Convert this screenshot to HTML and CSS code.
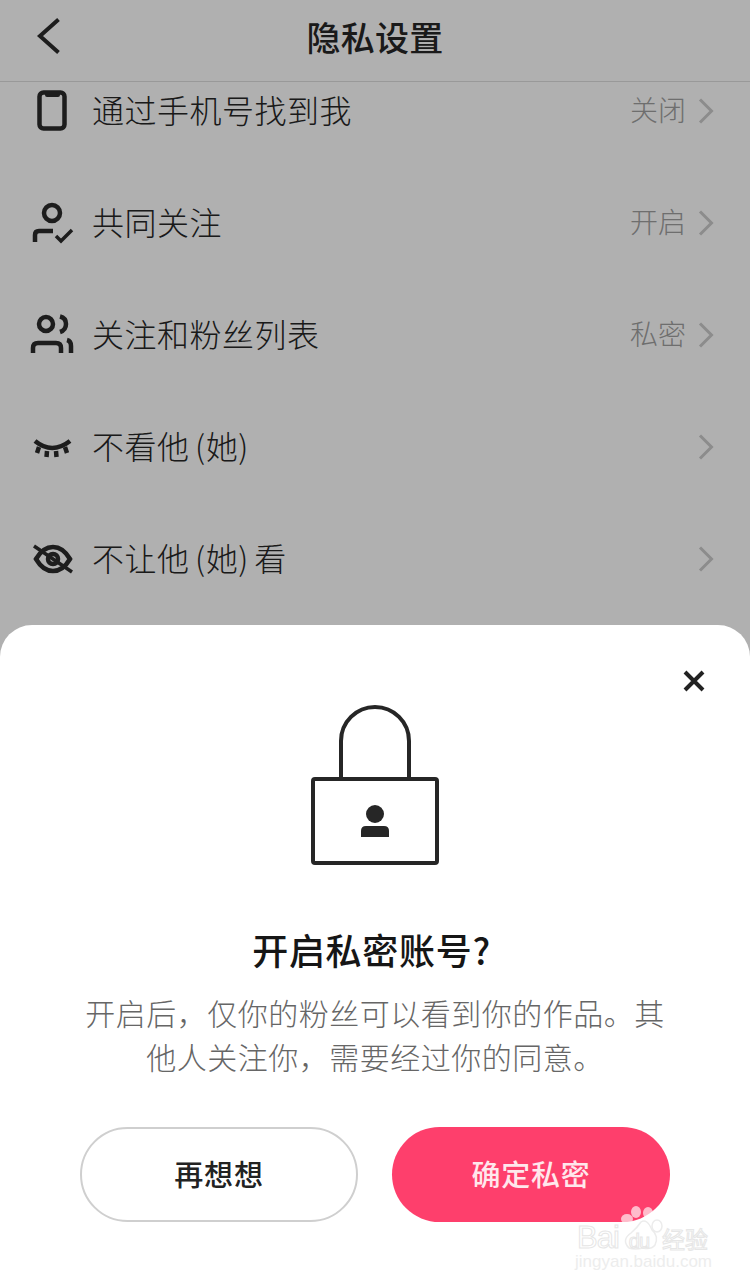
FILE: index.html
```html
<!DOCTYPE html>
<html lang="zh-CN">
<head>
    <meta charset="UTF-8">
    <meta name="viewport" content="width=device-width, initial-scale=1.0">
    <title>隐私设置</title>
    <link rel="stylesheet" href="styles.css">
</head>
<body>

  <div class="page">
    <header class="topbar">
      <svg class="back" width="28" height="40" viewBox="0 0 28 40"><path d="M23.500 2.500 L5 19 L23.500 35.500" /></svg>
      <h1>隐私设置</h1>
    </header>

    <ul class="settings">
      <li class="row">
        <svg class="icon" width="48" height="48" viewBox="0 0 48 48">
          <rect x="11.500" y="5.500" width="25" height="36" rx="4" />
          <path class="solid" d="M17 5 H32 V8 Q32 10 30 10 H19 Q17 10 17 8 Z" />
        </svg>
        <span class="name">通过手机号找到我</span>
        <span class="value">关闭</span>
        <svg class="chevron" width="16" height="26" viewBox="0 0 16 26"><path d="M2 1.500 L13.500 13 L2 24.500" /></svg>
      </li>
      <li class="row">
        <svg class="icon" width="48" height="48" viewBox="0 0 48 48">
          <circle cx="24" cy="14" r="8" />
          <path d="M7 43 V36 Q7 32 11 32 H25" />
          <path class="thin" d="M28 37 L33 42 L44 31" />
        </svg>
        <span class="name">共同关注</span>
        <span class="value">开启</span>
        <svg class="chevron" width="16" height="26" viewBox="0 0 16 26"><path d="M2 1.500 L13.500 13 L2 24.500" /></svg>
      </li>
      <li class="row">
        <svg class="icon" width="48" height="48" viewBox="0 0 48 48">
          <circle cx="18" cy="13" r="7" />
          <path d="M32 5.500 Q38 7 38 13 Q38 19 32 21" />
          <path d="M5 42 V37 Q5 32 10 32 H28 Q33 32 33 37 V42" />
          <path d="M39 29 Q43 30 43 35 V42" />
        </svg>
        <span class="name">关注和粉丝列表</span>
        <span class="value">私密</span>
        <svg class="chevron" width="16" height="26" viewBox="0 0 16 26"><path d="M2 1.500 L13.500 13 L2 24.500" /></svg>
      </li>
      <li class="row">
        <svg class="icon" width="48" height="48" viewBox="0 0 48 48">
          <path d="M7 18 Q24 32 42 18" />
          <path d="M11 24 L9 30 M19 28 L18.500 34 M28 28 L28.500 34 M37 24 L39 30" />
        </svg>
        <span class="name">不看他 (她)</span>
        <svg class="chevron" width="16" height="26" viewBox="0 0 16 26"><path d="M2 1.500 L13.500 13 L2 24.500" /></svg>
      </li>
      <li class="row">
        <svg class="icon" width="48" height="48" viewBox="0 0 48 48">
          <path d="M8 24 Q15 12 25 12 Q35 12 42 24 Q35 36 25 36 Q15 36 8 24 Z" />
          <circle cx="25" cy="24" r="5" />
          <path class="thin" d="M6 11 L44 37" />
        </svg>
        <span class="name">不让他 (她) 看</span>
        <svg class="chevron" width="16" height="26" viewBox="0 0 16 26"><path d="M2 1.500 L13.500 13 L2 24.500" /></svg>
      </li>
    </ul>
  </div>

  <div class="mask"></div>

  <section class="sheet">
    <svg class="close" width="24" height="24" viewBox="0 0 24 24"><path d="M3 3 L21 21 M21 3 L3 21" /></svg>
    <svg class="lock" width="128" height="160" viewBox="0 0 128 160">
      <path d="M30 74 V36 A34 34 0 0 1 98 36 V74" />
      <rect x="2" y="74" width="124" height="84" rx="2" />
      <circle class="solid" cx="64" cy="109" r="9" />
      <path class="solid" d="M50 132 V126 Q50 121 55 121 H73 Q78 121 78 126 V132 Z" />
    </svg>
    <h2>开启私密账号?</h2>
    <p>开启后&#65292;仅你的粉丝可以看到你的作品。其他人关注你&#65292;需要经过你的同意。</p>
    <div class="actions">
      <button class="btn btn-cancel">再想想</button>
      <button class="btn btn-ok">确定私密</button>
    </div>
  </section>

  <div class="watermark">
    <svg class="paw" width="50" height="50" viewBox="0 0 50 50">
      <ellipse class="pad" cx="6" cy="13" rx="6" ry="5" />
      <ellipse class="pad" cx="15" cy="6" rx="5" ry="6" />
      <ellipse class="pad" cx="27" cy="7" rx="5" ry="6" />
      <ellipse class="pad-line" cx="36" cy="20" rx="5" ry="6" />
      <path class="pad-line" d="M8 42 Q0 34 10 27 Q16 22 20 16 Q26 12 31 24 Q38 30 34 39 Q30 44 22 42 Q14 44 8 42 Z" />
    </svg>
    <div class="mark-name">
      <span>Bai</span>
      <span class="mark-du">du</span>
      <span class="mark-cn">经验</span>
    </div>
    <div class="mark-url">jingyan.baidu.com</div>
  </div>

</body>
</html>
```

FILE: styles.css
```css
* {
    margin: 0;
    padding: 0;
    box-sizing: border-box;
    font-family: "Noto Sans CJK SC", "Noto Sans", sans-serif;
}
html, body {
    height: 100%;
}
body {
    position: relative;
    width: 750px;
    height: 1287px;
    overflow: hidden;
    background: #fff;
}
.page {
    height: 100%;
    color: #262626;
}
.topbar {
    position: relative;
    z-index: 1;
    display: flex;
    align-items: center;
    justify-content: center;
    height: 82px;
    background: #fff;
    border-bottom: 1px solid #dedede;
}
.topbar h1 {
    font-size: 34px;
    font-weight: 500;
    line-height: 1;
    letter-spacing: 0.3px;
    margin-top: -8px;
}
.back {
    position: absolute;
    left: 35px;
    top: 17px;
    fill: none;
    stroke: #2b2b2b;
    stroke-width: 4;
}
.settings {
    list-style: none;
    margin-top: -27px;
    padding: 0 36px 0 28px;
}
.row {
    display: flex;
    align-items: center;
    height: 112px;
}
.icon {
    flex: none;
    fill: none;
    stroke: #2b2b2b;
    stroke-width: 4.500;
    margin-right: 16px;
}
.icon .thin {
    stroke-width: 3.500;
}
.icon .solid {
    fill: #2b2b2b;
    stroke: none;
}
.name {
    flex: 1;
    font-size: 32px;
    font-weight: 300;
    letter-spacing: 0.5px;
    word-spacing: -2px;
    margin-top: -5px;
}
.value {
    font-size: 28px;
    font-weight: 300;
    color: #a0a0a0;
    margin-right: 12px;
    margin-top: -5px;
}
.chevron {
    fill: none;
    stroke: #cbcbcb;
    stroke-width: 3;
}
.mask {
    position: absolute;
    inset: 0;
    z-index: 2;
    background: rgba(0, 0, 0, 0.31);
}
.sheet {
    position: absolute;
    left: 0;
    right: 0;
    top: 625px;
    bottom: 0;
    z-index: 3;
    display: flex;
    flex-direction: column;
    align-items: center;
    padding: 80px 80px 0;
    background: #fff;
    border-radius: 32px 32px 0 0;
    color: #1e1e1e;
}
.close {
    position: absolute;
    top: 44px;
    right: 44px;
    fill: none;
    stroke: #222;
    stroke-width: 4;
}
.lock {
    flex: none;
    fill: none;
    stroke: #262626;
    stroke-width: 4;
}
.lock .solid {
    fill: #262626;
    stroke: none;
}
.sheet h2 {
    margin-top: 59px;
    margin-right: 7px;
    font-size: 36px;
    font-weight: 500;
    line-height: 50px;
    letter-spacing: 0.7px;
    color: #161616;
}
.sheet p {
    margin-top: 16px;
    width: 590px;
    font-size: 30px;
    font-weight: 300;
    line-height: 44px;
    letter-spacing: 0.5px;
    text-align: center;
    color: #666;
}
.actions {
    display: flex;
    gap: 34px;
    margin-top: 49px;
}
.btn {
    width: 278px;
    height: 95px;
    padding-bottom: 3px;
    border-radius: 48px;
    font-size: 29px;
    font-weight: 500;
    letter-spacing: 0.8px;
}
.btn-cancel {
    background: #fff;
    border: 2px solid #cfcfcf;
    color: #222;
}
.btn-ok {
    background: #fe3f6c;
    border: none;
    color: #ffe7ec;
}
.watermark {
    position: absolute;
    z-index: 4;
    left: 575px;
    top: 1205px;
    width: 140px;
    height: 70px;
    pointer-events: none;
}
.paw {
    position: absolute;
    left: 46px;
    top: 1px;
}
.pad {
    fill: rgba(255, 255, 255, 0.65);
}
.pad-line {
    fill: none;
    stroke: #ececec;
    stroke-width: 1.500;
}
.mark-name {
    position: absolute;
    left: 2px;
    top: 17px;
    display: flex;
    align-items: center;
    height: 32px;
    font-family: "Liberation Sans", sans-serif;
    white-space: nowrap;
    color: #fff;
    -webkit-text-stroke: 1px #e6e6e6;
}
.mark-name span {
    font-family: "Liberation Sans", sans-serif;
    font-size: 31px;
    letter-spacing: -1px;
}
.mark-name .mark-du {
    margin-left: 10px;
    font-size: 20px;
    margin-top: 6px;
}
.mark-name .mark-cn {
    margin-left: 13px;
    font-family: "Noto Sans CJK SC", sans-serif;
    font-size: 23px;
    letter-spacing: 0;
}
.mark-url {
    position: absolute;
    left: 0;
    top: 47px;
    font-family: "Liberation Sans", sans-serif;
    font-size: 17px;
    line-height: 20px;
    white-space: nowrap;
    color: #ededed;
}
```
